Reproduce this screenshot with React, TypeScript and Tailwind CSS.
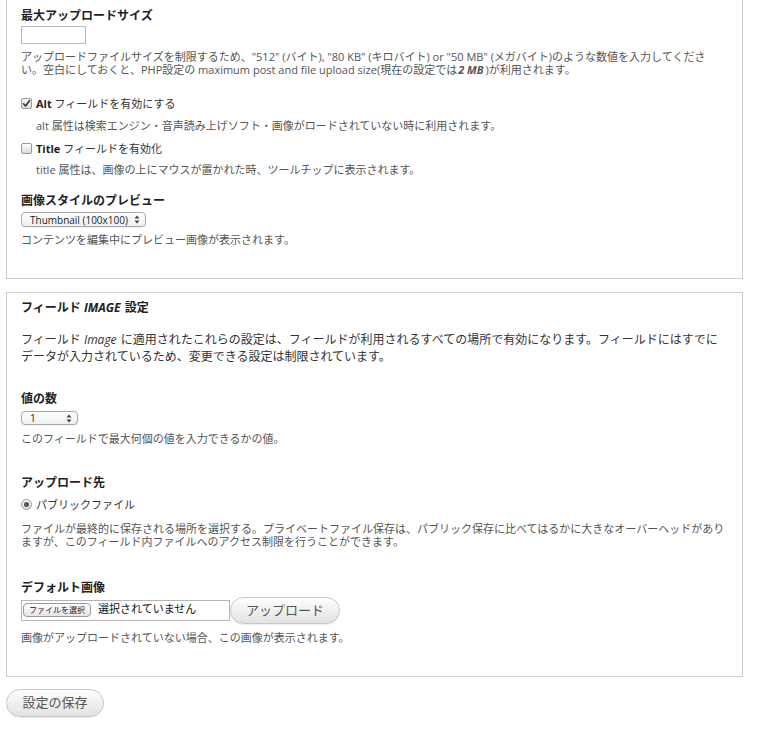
const font = 'font-["Open_Sans","Noto_Sans_CJK_JP",sans-serif]';

function UpDown() {
  return (
    <svg width="6" height="9" viewBox="0 0 6 9" className="shrink-0">
      <path d="M3 0.5 L5.5 3.5 L0.5 3.5 Z" fill="#444" />
      <path d="M3 8.5 L5.5 5.5 L0.5 5.5 Z" fill="#444" />
    </svg>
  );
}

function FakeSelect({ label, width }: { label: string; width: string }) {
  return (
    <div
      className={`${width} flex items-center justify-between rounded-[4px] border border-[#a9a9a9] bg-gradient-to-b from-white to-[#efefef] pl-[8px] pr-[5px] text-[10px] leading-none whitespace-nowrap text-[#222] shadow-[0_1px_0_rgba(0,0,0,0.06)]`}
    >
      <span>{label}</span>
      <UpDown />
    </div>
  );
}

function Check({ checked }: { checked: boolean }) {
  return (
    <span className="flex h-[11px] w-[11px] shrink-0 items-center justify-center rounded-[2px] border border-[#9a9a9a] bg-gradient-to-b from-[#fdfdfd] to-[#dcdcdc]">
      {checked && (
        <svg width="9" height="9" viewBox="0 0 9 9">
          <path d="M1.5 4.8 L3.6 7 L7.6 1.6" stroke="#333" strokeWidth="1.6" fill="none" strokeLinecap="round" strokeLinejoin="round" />
        </svg>
      )}
    </span>
  );
}

function Heading({ children, className = '' }: { children: React.ReactNode; className?: string }) {
  return <div className={`text-[12px] font-bold leading-[15px] text-[#222] ${className}`}>{children}</div>;
}

function Desc({ children, className = '' }: { children: React.ReactNode; className?: string }) {
  return <div className={`text-[11px] leading-[13px] text-[#555] ${className}`}>{children}</div>;
}

function RoundButton({ children, className = '' }: { children: React.ReactNode; className?: string }) {
  return (
    <button
      className={`flex items-center justify-center rounded-full border border-[#c8c8c8] bg-gradient-to-b from-[#fefefe] to-[#e2e2e2] text-[13px] text-[#555] shadow-[0_1px_1px_rgba(0,0,0,0.08)] ${className}`}
    >
      {children}
    </button>
  );
}

export default function App() {
  return (
    <div className={`${font} min-h-[731px] w-[766px] bg-white`}>
      <div className="ml-[6px] w-[737px]">
        {/* upper fieldset, top edge scrolled off */}
        <div className="border border-t-0 border-[#cccccc] pb-[32px] pl-[14px] pr-[14px] pt-[8px]">
          <Heading>最大アップロードサイズ</Heading>
          <div className="mt-[3px] h-[18px] w-[65px] border border-[#bbbbbb] bg-white" />
          <Desc className="mt-[6px] max-w-[692px]">
            アップロードファイルサイズを制限するため、"512" (バイト), "80 KB" (キロバイト) or "50 MB" (メガバイト)のような数値を入力してください。空白にしておくと、PHP設定の maximum post and file upload size(現在の設定では<em className="pl-[1px] pr-[2px] font-bold">2 MB</em>)が利用されます。
          </Desc>

          <label className="mt-[20px] flex items-center gap-[4px] text-[11px] leading-[15px] text-[#333]">
            <Check checked />
            <span>
              <b className="text-[#222]">Alt</b> フィールドを有効にする
            </span>
          </label>
          <Desc className="mt-[8px] pl-[15px]">alt 属性は検索エンジン・音声読み上げソフト・画像がロードされていない時に利用されます。</Desc>

          <label className="mt-[9px] flex items-center gap-[4px] text-[11px] leading-[15px] text-[#333]">
            <Check checked={false} />
            <span>
              <b className="text-[#222]">Title</b> フィールドを有効化
            </span>
          </label>
          <Desc className="mt-[7px] pl-[15px]">title 属性は、画像の上にマウスが置かれた時、ツールチップに表示されます。</Desc>

          <Heading className="mt-[17px]">画像スタイルのプレビュー</Heading>
          <div className="mt-[4px] h-[15px]">
            <FakeSelect label="Thumbnail (100x100)" width="w-[125px] h-[15px]" />
          </div>
          <Desc className="mt-[6px]">コンテンツを編集中にプレビュー画像が表示されます。</Desc>
        </div>

        {/* field settings */}
        <div className="mt-[13px] border border-[#cccccc] pb-[32px] pl-[14px] pr-[14px] pt-[7px]">
          <Heading>
            フィールド <i className="pr-[1px] uppercase">Image</i> 設定
          </Heading>
          <p className="mt-[16px] text-[12px] leading-[17px] text-[#333]">
            フィールド <i className="pr-[1px]">Image</i> に適用されたこれらの設定は、フィールドが利用されるすべての場所で有効になります。フィールドにはすでにデータが入力されているため、変更できる設定は制限されています。
          </p>

          <Heading className="mt-[26px]">値の数</Heading>
          <div className="mt-[5px]">
            <FakeSelect label="1" width="w-[57px] h-[14px]" />
          </div>
          <Desc className="mt-[7px]">このフィールドで最大何個の値を入力できるかの値。</Desc>

          <Heading className="mt-[30px]">アップロード先</Heading>
          <label className="mt-[7px] flex items-center gap-[4px] text-[11px] leading-[15px] text-[#333]">
            <span className="flex h-[11px] w-[11px] items-center justify-center rounded-full border border-[#9a9a9a] bg-gradient-to-b from-[#fdfdfd] to-[#d8d8d8]">
              <span className="h-[5px] w-[5px] rounded-full bg-[#555]" />
            </span>
            <span>パブリックファイル</span>
          </label>
          <Desc className="mt-[10px]">
            ファイルが最終的に保存される場所を選択する。プライベートファイル保存は、パブリック保存に比べてはるかに大きなオーバーヘッドがありますが、このフィールド内ファイルへのアクセス制限を行うことができます。
          </Desc>

          <Heading className="mt-[32px]">デフォルト画像</Heading>
          <div className="mt-[2px] flex items-center">
            <div className="flex h-[21px] w-[209px] items-start gap-[7px] border border-[#b5b5b5] bg-white pl-[1px] pt-[2px]">
              <span className="flex h-[14px] w-[68px] items-center justify-center rounded-[4px] border border-[#9a9a9a] bg-gradient-to-b from-white to-[#e6e6e6] text-[8px] leading-none text-[#222]">
                ファイルを選択
              </span>
              <span className="text-[11px] leading-[12px] text-[#111]">選択されていません</span>
            </div>
            <RoundButton className="h-[27px] w-[110px]">アップロード</RoundButton>
          </div>
          <Desc className="mt-[7px]">画像がアップロードされていない場合、この画像が表示されます。</Desc>
        </div>

        <RoundButton className="mt-[12px] h-[28px] w-[98px]">設定の保存</RoundButton>
      </div>
    </div>
  );
}
